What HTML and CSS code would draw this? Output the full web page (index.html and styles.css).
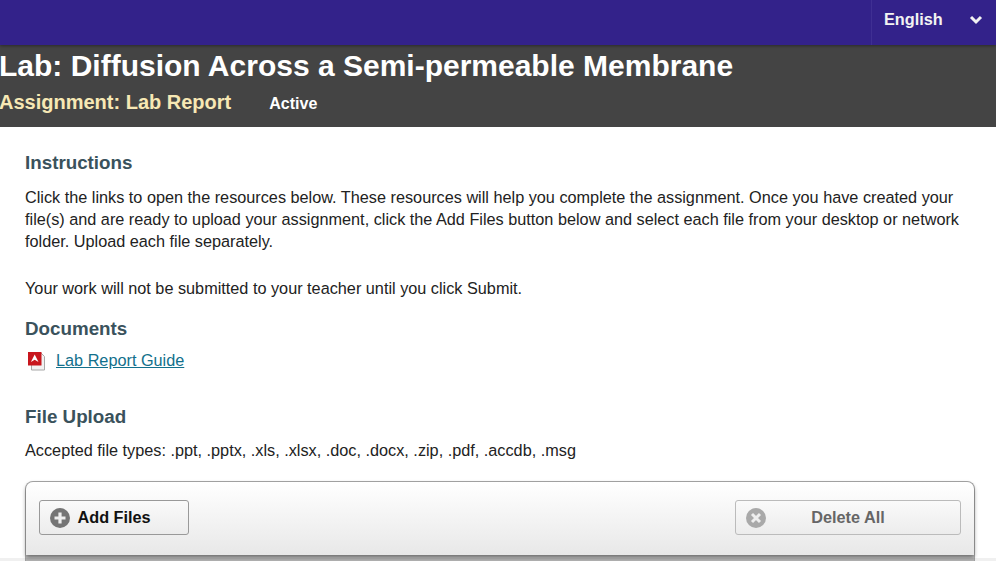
FILE: index.html
```html
<!DOCTYPE html>
<html lang="en">
<head>
  <meta charset="UTF-8">
  <meta name="viewport" content="width=device-width, initial-scale=1.0">
  <title>Lab Report</title>
  <link rel="stylesheet" href="styles.css">
</head>
<body>
  <div class="top-bar">
    <div class="lang-select">
      <span>English</span>
      <svg class="chevron" width="14" height="10" viewBox="0 0 14 10"><path d="M2 2l5 5 5-5" fill="none" stroke="#f2f2f2" stroke-width="3"/></svg>
    </div>
  </div>

  <header class="title-bar">
    <h1>Lab: Diffusion Across a Semi-permeable Membrane</h1>
    <div class="sub-title">
      <span class="assignment">Assignment: Lab Report</span>
      <span class="status">Active</span>
    </div>
  </header>

  <main class="content">
    <h2 class="first">Instructions</h2>
    <p>Click the links to open the resources below. These resources will help you complete the assignment. Once you have created your file(s) and are ready to upload your assignment, click the Add Files button below and select each file from your desktop or network folder. Upload each file separately.</p>
    <p class="note">Your work will not be submitted to your teacher until you click Submit.</p>

    <h2 class="docs">Documents</h2>
    <div class="doc-row">
      <svg class="pdf-icon" width="20" height="20" viewBox="0 0 20 20">
        <path d="M5.500 1.500h9l4 4v13.500h-13z" fill="#f2f2f2" stroke="#a8a8a8"/>
        <path d="M2 1h13.500v13.500H2z" fill="#c8161d"/>
        <path d="M8.700 3.500l3.800 7.500-3.800-2.200-3.800 2.200z" fill="#fff"/>
      </svg>
      <a href="#">Lab Report Guide</a>
    </div>

    <h2 class="upload">File Upload</h2>
    <p class="types">Accepted file types: .ppt, .pptx, .xls, .xlsx, .doc, .docx, .zip, .pdf, .accdb, .msg</p>

    <div class="upload-panel">
      <div class="panel-bar">
        <button class="btn btn-add" type="button">
          <svg width="20" height="20" viewBox="0 0 20 20"><circle cx="10" cy="10" r="10" fill="#757575"/><path d="M10 4.500v11M4.500 10h11" stroke="#eee" stroke-width="3.200"/></svg>
          <span>Add Files</span>
        </button>
        <button class="btn btn-delete" type="button">
          <svg class="delete-icon" width="20" height="20" viewBox="0 0 20 20"><circle cx="10" cy="10" r="10" fill="#a9a9a9"/><path d="M6 6l8 8M14 6l-8 8" stroke="#eee" stroke-width="3"/></svg>
          <span>Delete All</span>
        </button>
      </div>
    </div>
  </main>
</body>
</html>
```

FILE: styles.css
```css
html, body {
  height: 561px;
  overflow: hidden;
}
body {
  margin: 0;
  font-family: "Liberation Sans", Arial, sans-serif;
  font-size: 16.25px;
  line-height: 22px;
  color: #222;
  background: #fff;
}
/* faint shade along the bottom edge of the window */
body::after {
  content: "";
  position: fixed;
  left: 0;
  right: 0;
  bottom: 0;
  height: 3px;
  background: rgba(0, 0, 0, 0.06);
}
.top-bar {
  height: 45px;
  background: #33228a;
  display: flex;
  justify-content: flex-end;
  box-shadow: 0 1px 3px rgba(0, 0, 0, 0.4);
  position: relative;
}
.lang-select {
  width: 125px;
  border-left: 1px solid #3f2f93;
  display: flex;
  align-items: center;
  justify-content: space-between;
  padding: 0 13px 7px 12px;
  box-sizing: border-box;
  color: #f2f2f2;
  font-weight: bold;
}
.chevron {
  margin-top: 1px;
}
.title-bar {
  height: 82px;
  background: #444;
  color: #fff;
}
.title-bar h1 {
  margin: 0 0 0 -1px;
  padding-top: 4px;
  font-size: 30px;
  line-height: 34px;
}
.sub-title {
  display: flex;
  align-items: baseline;
  gap: 38px;
  margin: 8px 0 0 -1px;
}
.assignment {
  color: #f7e8b4;
  font-size: 20px;
  font-weight: bold;
}
.status {
  font-size: 16px;
  font-weight: bold;
}
.content {
  padding: 0 21px 0 25px;
}
h2 {
  margin: 0;
  font-size: 18.8px;
  line-height: 24px;
  color: #3a525c;
}
h2.first {
  padding-top: 24px;
}
p {
  margin: 0;
}
.content h2.first + p {
  margin-top: 11px;
}
.note {
  margin-top: 25px;
}
.docs {
  margin-top: 18px;
}
.doc-row {
  display: flex;
  align-items: center;
  gap: 10px;
  margin-top: 8px;
}
.pdf-icon {
  margin: 2px 0 0 1px;
}
.doc-row a {
  color: #12708c;
}
.upload {
  margin-top: 34px;
}
.types {
  margin-top: 10px;
}
.upload-panel {
  margin: 20px 0 0;
  height: 90px;
  border: 1px solid #aaa;
  border-bottom: none;
  border-radius: 8px 8px 0 0;
  background: #bdbdbd;
  box-sizing: border-box;
}
.panel-bar {
  height: 73px;
  border-radius: 7px 7px 0 0;
  background: linear-gradient(#fff, #e8e8e8);
  box-shadow: 0 2px 4px rgba(0, 0, 0, 0.45);
  display: flex;
  justify-content: space-between;
  align-items: flex-start;
  padding: 18px 13px 0;
  box-sizing: border-box;
}
.btn {
  height: 35px;
  border: 1px solid #999;
  border-radius: 3px;
  background: linear-gradient(#fafafa, #ececec);
  font-family: inherit;
  font-size: 16.25px;
  font-weight: bold;
  display: flex;
  align-items: center;
  padding: 0 10px;
}
.btn-add {
  width: 150px;
  color: #111;
  gap: 7.5px;
}
.btn-delete {
  width: 226px;
  color: #666;
  border-color: #bbb;
  justify-content: center;
  position: relative;
}
.delete-icon {
  position: absolute;
  left: 10px;
  top: 7px;
}
```
